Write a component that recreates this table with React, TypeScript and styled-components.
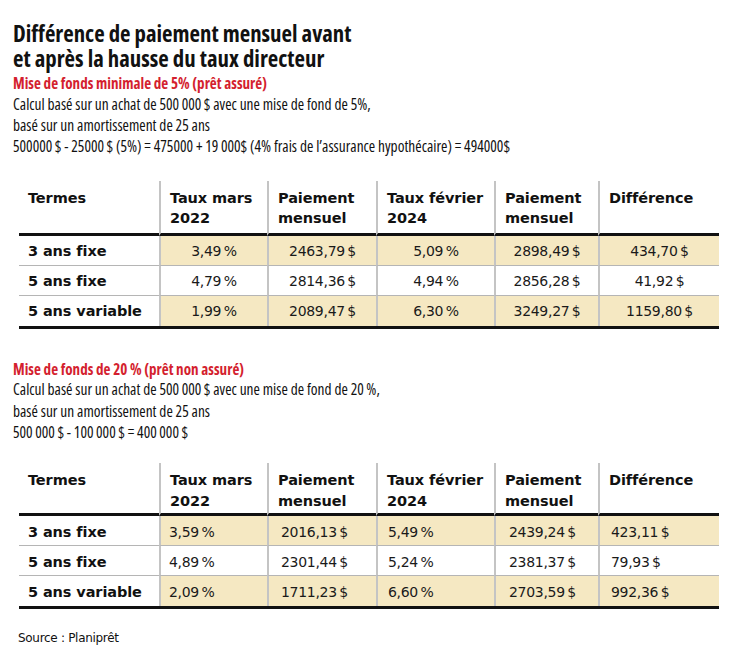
import React from "react";
import styled, { createGlobalStyle, css } from "styled-components";

const GlobalStyle = createGlobalStyle`
  html, body { margin: 0; padding: 0; background: #ffffff; }
  body { color: #111111; }
`;

const Page = styled.main`
  width: 729px;
  box-sizing: border-box;
  padding: 21px 10px 0 13px;
`;

const Title = styled.h1`
  margin: 0;
  font-family: "Open Sans", sans-serif;
  font-stretch: 75%;
  font-weight: 700;
  font-size: 22.8px;
  line-height: 25px;
  color: #111111;
`;

const Subtitle = styled.h2<{ $top: number }>`
  margin: ${(p) => p.$top}px 0 0;
  font-family: "Open Sans", sans-serif;
  font-stretch: 75%;
  font-weight: 700;
  font-size: 15.1px;
  line-height: 20.5px;
  color: #d41f2f;
`;

const Body = styled.p`
  margin: 0;
  font-family: "Open Sans", sans-serif;
  font-stretch: 75%;
  font-weight: 400;
  font-size: 15.4px;
  line-height: 21.4px;
  color: #111111;
`;

const Table = styled.div<{ $top: number }>`
  margin: ${(p) => p.$top}px 0 0 6px;
  width: 700px;
  display: grid;
  grid-template-columns: 140px 108px 109px 118px 104px 1fr;
  font-family: "DejaVu Sans", sans-serif;
  border-bottom: 3px solid #111111;
`;

const Head = styled.div`
  display: contents;
`;

const HeadCell = styled.div<{ $first?: boolean; $height: number }>`
  box-sizing: content-box;
  height: ${(p) => p.$height - 7}px;
  padding: 7px 8px 0 9px;
  font-weight: 700;
  font-size: 14.5px;
  line-height: 20.5px;
  letter-spacing: -0.1px;
  border-bottom: 3px solid #111111;
  ${(p) =>
    !p.$first &&
    css`
      border-left: 2px solid #c4c4c4;
    `}
`;

const Row = styled.div`
  display: contents;
`;

const LabelCell = styled.div<{ $last?: boolean }>`
  box-sizing: border-box;
  height: 30px;
  padding: 5.5px 0 0 9px;
  font-weight: 700;
  font-size: 14.5px;
  line-height: 20px;
  letter-spacing: -0.1px;
  background: #ffffff;
  ${(p) =>
    !p.$last &&
    css`
      border-bottom: 1px solid #b5b5b5;
    `}
`;

const ValueCell = styled.div<{ $shaded: boolean; $last?: boolean; $align: "center" | "left"; $pad: number }>`
  box-sizing: border-box;
  height: 30px;
  padding: 5.5px 0 0 ${(p) => (p.$align === "left" ? p.$pad : 0)}px;
  text-align: ${(p) => p.$align};
  font-weight: 400;
  font-size: 14px;
  line-height: 20px;
  letter-spacing: -0.3px;
  color: #1a1a1a;
  border-left: 2px solid #c4c4c4;
  background: ${(p) => (p.$shaded ? "#f5e8c2" : "#ffffff")};
  ${(p) =>
    !p.$last &&
    css`
      border-bottom: 1px solid #b5b5b5;
    `}
`;

const Source = styled.p`
  margin: 20px 0 0 5px;
  font-family: "DejaVu Sans", sans-serif;
  font-size: 12px;
  line-height: 18px;
  letter-spacing: -0.3px;
  color: #111111;
`;

const T = "\u2009";

type Data = { label: string; values: string[] }[];

const headers = [
  ["Termes"],
  ["Taux mars", "2022"],
  ["Paiement", "mensuel"],
  ["Taux février", "2024"],
  ["Paiement", "mensuel"],
  ["Différence"],
];

const table1: Data = [
  { label: "3 ans fixe", values: [`3,49${T}%`, `2463,79${T}$`, `5,09${T}%`, `2898,49${T}$`, `434,70${T}$`] },
  { label: "5 ans fixe", values: [`4,79${T}%`, `2814,36${T}$`, `4,94${T}%`, `2856,28${T}$`, `41,92${T}$`] },
  { label: "5 ans variable", values: [`1,99${T}%`, `2089,47${T}$`, `6,30${T}%`, `3249,27${T}$`, `1159,80${T}$`] },
];

const table2: Data = [
  { label: "3 ans fixe", values: [`3,59${T}%`, `2016,13${T}$`, `5,49${T}%`, `2439,24${T}$`, `423,11${T}$`] },
  { label: "5 ans fixe", values: [`4,89${T}%`, `2301,44${T}$`, `5,24${T}%`, `2381,37${T}$`, `79,93${T}$`] },
  { label: "5 ans variable", values: [`2,09${T}%`, `1711,23${T}$`, `6,60${T}%`, `2703,59${T}$`, `992,36${T}$`] },
];

function RateTable({
  data,
  align,
  top,
  pads,
  headHeight,
}: {
  data: Data;
  align: "center" | "left";
  top: number;
  pads: number[];
  headHeight: number;
}) {
  return (
    <Table $top={top}>
      <Head>
        {headers.map((h, i) => (
          <HeadCell key={i} $first={i === 0} $height={headHeight}>
            {h.map((line, j) => (
              <React.Fragment key={j}>
                {j > 0 && <br />}
                {line}
              </React.Fragment>
            ))}
          </HeadCell>
        ))}
      </Head>
      {data.map((r, ri) => (
        <Row key={r.label}>
          <LabelCell $last={ri === data.length - 1}>{r.label}</LabelCell>
          {r.values.map((v, vi) => (
            <ValueCell
              key={vi}
              $shaded={ri !== 1}
              $last={ri === data.length - 1}
              $align={align}
              $pad={pads[vi]}
            >
              {v}
            </ValueCell>
          ))}
        </Row>
      ))}
    </Table>
  );
}

export default function App() {
  return (
    <Page>
      <GlobalStyle />
      <Title>
        Différence de paiement mensuel avant
        <br />
        et après la hausse du taux directeur
      </Title>
      <Subtitle $top={2}>Mise de fonds minimale de 5% (prêt assuré)</Subtitle>
      <Body>
        Calcul basé sur un achat de 500{T}000{T}$ avec une mise de fond de 5%,
        <br />
        basé sur un amortissement de 25 ans
        <br />
        500000{T}$ - 25000{T}$ (5%) = 475000 + 19{T}000$ (4% frais de l’assurance hypothécaire) = 494000$
      </Body>
      <RateTable data={table1} align="center" top={23} pads={[0, 0, 0, 0, 0]} headHeight={52} />
      <Subtitle $top={30}>Mise de fonds de 20{T}% (prêt non assuré)</Subtitle>
      <Body>
        Calcul basé sur un achat de 500{T}000{T}$ avec une mise de fond de 20{T}%,
        <br />
        basé sur un amortissement de 25 ans
        <br />
        500{T}000{T}$ - 100{T}000{T}$ = 400{T}000{T}$
      </Body>
      <RateTable data={table2} align="left" top={20} pads={[8, 12, 10, 13, 11]} headHeight={50} />
      <Source>Source : Planiprêt</Source>
    </Page>
  );
}
